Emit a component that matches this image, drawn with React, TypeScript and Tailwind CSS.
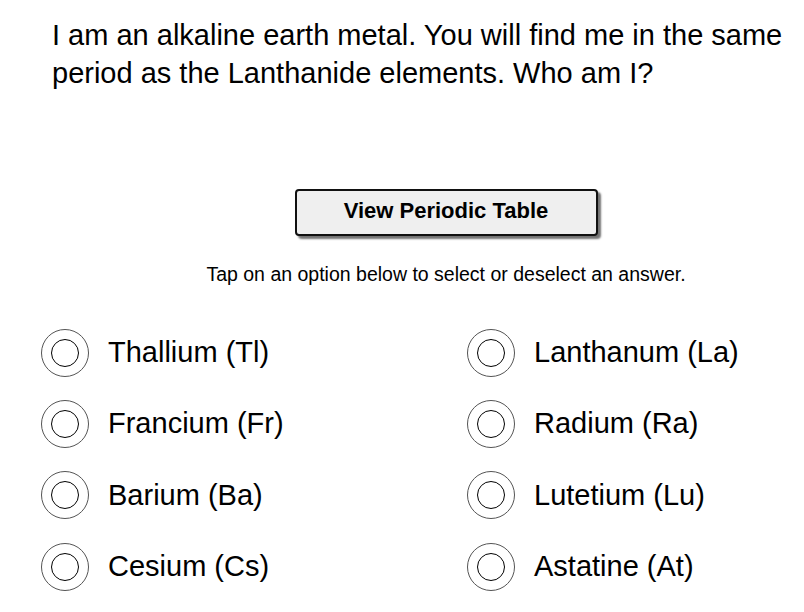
import React from "react";

const left = ["Thallium (Tl)", "Francium (Fr)", "Barium (Ba)", "Cesium (Cs)"];
const right = ["Lanthanum (La)", "Radium (Ra)", "Lutetium (Lu)", "Astatine (At)"];

function Radio() {
  return (
    <div className="w-[48px] h-[48px] rounded-full border border-[#555] flex items-center justify-center shrink-0">
      <div className="w-[28px] h-[28px] rounded-full border-[1.5px] border-black" />
    </div>
  );
}

function Option({ label }: { label: string }) {
  return (
    <div className="flex items-center h-[71.3px]">
      <Radio />
      <span className="ml-[19px] text-[29px] text-black leading-none">{label}</span>
    </div>
  );
}

export default function App() {
  return (
    <div
      className="w-[804px] h-[612px] bg-white overflow-hidden text-black"
      style={{ fontFamily: '"Liberation Sans", Arial, Helvetica, sans-serif' }}
    >
      <p className="pl-[52px] pr-[8px] pt-[16px] text-[29px] leading-[38px]">
        I am an alkaline earth metal. You will find me in the same period as the Lanthanide elements. Who am I?
      </p>
      <div className="pl-[88px] flex flex-col items-center mt-[97px]">
        <button className="w-[303px] h-[47px] rounded-[4px] border-2 border-[#111] bg-[#efefef] shadow-[3px_3px_2px_rgba(0,0,0,0.55)] text-[22px] font-bold leading-none pb-[4px]">
          View Periodic Table
        </button>
        <p className="mt-[27px] text-[19.5px] leading-[22px]">
          Tap on an option below to select or deselect an answer.
        </p>
      </div>
      <div className="grid grid-cols-[426px_1fr] pl-[41px] mt-[32px]">
        <div className="flex flex-col">
          {left.map((l) => (
            <Option key={l} label={l} />
          ))}
        </div>
        <div className="flex flex-col">
          {right.map((l) => (
            <Option key={l} label={l} />
          ))}
        </div>
      </div>
    </div>
  );
}
